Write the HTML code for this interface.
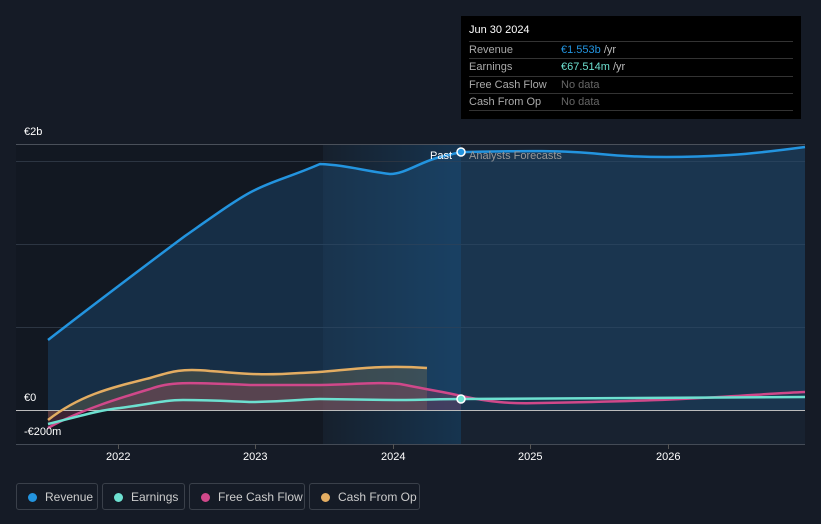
<!DOCTYPE html>
<html><head><meta charset="utf-8"><style>
body{margin:0;width:821px;height:524px;background:#151b26;font-family:"Liberation Sans",sans-serif;overflow:hidden;position:relative}
.t{position:absolute;color:#fff;font-size:11px}
.tip{position:absolute;left:461px;top:16px;width:340px;height:103px;background:#000;}
.tip .h{position:absolute;left:8px;top:8px;color:#fff;font-size:11px}
.row{position:absolute;left:8px;width:324px;border-top:1px solid #333;height:17px;font-size:11px;line-height:17px;color:#aaa}
.row span{position:absolute;left:92px}
.leg{position:absolute;top:483px;height:27px;border:1px solid #3a404a;border-radius:3px;color:#ccc;font-size:12px;line-height:27px;box-sizing:border-box}
.leg i{position:absolute;left:11px;top:9px;width:9px;height:9px;border-radius:50%}
.leg b{font-weight:normal;position:absolute;left:28px}
</style></head><body>
<svg width="821" height="524" style="position:absolute;left:0;top:0">
<defs>
<linearGradient id="pg" x1="0" x2="1"><stop offset="0" stop-color="#111722"/><stop offset="1" stop-color="#131a26"/></linearGradient>
<linearGradient id="hl" x1="0" x2="1"><stop offset="0" stop-color="#16202d"/><stop offset="1" stop-color="#16344f"/></linearGradient>
</defs>
<rect x="16" y="145" width="307" height="299" fill="#121822"/>
<rect x="323" y="145" width="138" height="299" fill="url(#hl)"/>
<rect x="461" y="145" width="344" height="299" fill="#182230"/>
<g stroke="#2c3542" stroke-width="1">
<line x1="16" y1="144.5" x2="805" y2="144.5" stroke="#4a505a"/>
<line x1="16" y1="161.5" x2="805" y2="161.5"/>
<line x1="16" y1="244.5" x2="805" y2="244.5"/>
<line x1="16" y1="327.5" x2="805" y2="327.5"/>
<line x1="16" y1="444.5" x2="805" y2="444.5" stroke="#444b56"/>
<line x1="118.5" y1="444" x2="118.5" y2="449" stroke="#555"/>
<line x1="255.5" y1="444" x2="255.5" y2="449" stroke="#555"/>
<line x1="393.5" y1="444" x2="393.5" y2="449" stroke="#555"/>
<line x1="530.5" y1="444" x2="530.5" y2="449" stroke="#555"/>
<line x1="668.5" y1="444" x2="668.5" y2="449" stroke="#555"/>
</g>
<path d="M48,340 C80,315 150,262 185,236 C215,215 240,197 255,190 C275,180 290,177 320,164 C345,165 365,171 390,174 C405,174 420,162 440,157 L461,152 C520,151 560,150 600,154 C640,158 680,158 730,155 C760,153 790,149 805,147 L805,410 L48,410Z" fill="#1f5a8a" opacity="0.35"/>
<path d="M48,420 C80,395 110,388 150,378 C170,372 180,368 210,371 C240,373 255,376 300,373 C340,372 370,364 427,368 L427,410 L48,410Z" fill="#8a7a50" opacity="0.3"/>
<path d="M48,428 C80,410 120,398 150,389 C170,382 183,382 250,385 L320,385 C360,384 380,382 400,384 C430,390 450,393 461,396 L461,410 L48,410Z" fill="#a04060" opacity="0.3"/>
<line x1="16" y1="410.5" x2="805" y2="410.5" stroke="#bbb" stroke-width="1"/>
<path d="M48,340 C80,315 150,262 185,236 C215,215 240,197 255,190 C275,180 290,177 320,164 C345,165 365,171 390,174 C405,174 420,162 440,157 L461,152 C520,151 560,150 600,154 C640,158 680,158 730,155 C760,153 790,149 805,147" fill="none" stroke="#2394df" stroke-width="2.5"/>
<path d="M48,420 C80,395 110,388 150,378 C170,372 180,368 210,371 C240,373 255,376 300,373 C340,372 370,364 427,368" fill="none" stroke="#e3ad62" stroke-width="2.5"/>
<path d="M48,428 C80,410 120,398 150,389 C170,382 183,382 250,385 L320,385 C360,384 380,382 400,384 C430,390 450,393 461,396 C490,402 510,404 540,403 C600,402 650,401 700,398 C740,396 780,393 805,392" fill="none" stroke="#d0488a" stroke-width="2.5"/>
<path d="M48,424 C80,416 100,410 120,408 C150,404 165,400 183,400 C220,400 240,402 255,402 C290,401 310,399 320,399 L395,400 C420,400 440,399 461,399 L805,397" fill="none" stroke="#6de0d0" stroke-width="2.5"/>
<circle cx="461" cy="152" r="4" fill="#2394df" stroke="#fff" stroke-width="1.5"/>
<circle cx="461" cy="399" r="4" fill="#6de0d0" stroke="#fff" stroke-width="1.5"/>
</svg>
<div class="t" style="left:24px;top:126px">€2b</div>
<div class="t" style="left:24px;top:392px">€0</div>
<div class="t" style="left:24px;top:426px">-€200m</div>
<div class="t" style="left:430px;top:150px">Past</div>
<div class="t" style="left:469px;top:150px;color:#999">Analysts Forecasts</div>
<div class="t" style="left:106px;top:451px">2022</div>
<div class="t" style="left:243px;top:451px">2023</div>
<div class="t" style="left:381px;top:451px">2024</div>
<div class="t" style="left:518px;top:451px">2025</div>
<div class="t" style="left:656px;top:451px">2026</div>
<div class="tip"><div class="h">Jun 30 2024</div>
<div class="row" style="top:25px">Revenue<span><a style="color:#2394df">€1.553b</a> <a style="color:#bbb">/yr</a></span></div>
<div class="row" style="top:42px">Earnings<span><a style="color:#6de0d0">€67.514m</a> <a style="color:#bbb">/yr</a></span></div>
<div class="row" style="top:60px">Free Cash Flow<span style="color:#666">No data</span></div>
<div class="row" style="top:77px">Cash From Op<span style="color:#666">No data</span></div>
<div class="row" style="top:94px;height:0"></div>
</div>
<div class="leg" style="left:16px;width:82px"><i style="background:#2394df"></i><b>Revenue</b></div>
<div class="leg" style="left:102px;width:83px"><i style="background:#6de0d0"></i><b>Earnings</b></div>
<div class="leg" style="left:189px;width:116px"><i style="background:#d0488a"></i><b>Free Cash Flow</b></div>
<div class="leg" style="left:309px;width:111px"><i style="background:#e3ad62"></i><b>Cash From Op</b></div>
</body></html>
